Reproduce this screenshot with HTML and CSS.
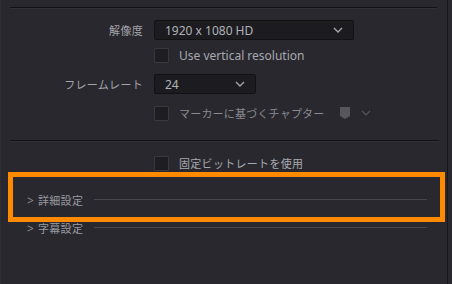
FILE: index.html
```html
<!DOCTYPE html>
<html lang="ja">
<head>
    <meta charset="UTF-8">
    <meta name="viewport" content="width=device-width, initial-scale=1.0">
    <title>Export Settings</title>
    <link rel="stylesheet" href="styles.css">
</head>
<body>
    <div class="panel">
        <div class="sep"></div>

        <div class="form">
            <div class="row">
                <span class="label">解像度</span>
                <div class="select wide">
                    <span>1920 x 1080 HD</span>
                    <svg class="chev" width="10" height="6" viewBox="0 0 10 6"><path d="M1 1l4 4 4-4" fill="none" stroke="#a4a4aa" stroke-width="1.4"/></svg>
                </div>
            </div>
            <div class="row check-row first-check">
                <span class="label"></span>
                <label class="check"><span class="box"></span>Use vertical resolution</label>
            </div>
            <div class="row select-row">
                <span class="label">フレームレート</span>
                <div class="select narrow">
                    <span>24</span>
                    <svg class="chev" width="10" height="6" viewBox="0 0 10 6"><path d="M1 1l4 4 4-4" fill="none" stroke="#a4a4aa" stroke-width="1.4"/></svg>
                </div>
            </div>
            <div class="row check-row">
                <span class="label"></span>
                <label class="check dim"><span class="box"></span>マーカーに基づくチャプター</label>
                <svg class="marker" width="12" height="14" viewBox="0 0 12 14"><path d="M1 1h10v9l-5 3-5-3z" fill="#56565c"/></svg>
                <svg class="chev dim-chev" width="10" height="6" viewBox="0 0 10 6"><path d="M1 1l4 4 4-4" fill="none" stroke="#55555b" stroke-width="1.2"/></svg>
            </div>
        </div>

        <div class="sep second"></div>

        <div class="form">
            <div class="row check-row bitrate">
                <span class="label"></span>
                <label class="check"><span class="box"></span>固定ビットレートを使用</label>
            </div>
        </div>

        <div class="sections">
            <div class="highlight"></div>
            <div class="section">
                <span class="arrow">&gt;</span>
                <span class="title">詳細設定</span>
                <span class="rule"></span>
            </div>
            <div class="section">
                <span class="arrow">&gt;</span>
                <span class="title">字幕設定</span>
                <span class="rule"></span>
            </div>
        </div>
    </div>
</body>
</html>
```

FILE: styles.css
```css
body {
    margin: 0;
    padding: 0;
    width: 452px;
    height: 284px;
    overflow: hidden;
    background-color: #28282e;
    font-family: "Noto Sans", "Noto Sans CJK JP", sans-serif;
    color: #a3a3a9;
}

.panel {
    height: 284px;
    width: 448px;
    box-sizing: border-box;
    padding-top: 7px;
    border-left: 1px solid #2f2f35;
    border-right: 1px solid #17171a;
}

.sep {
    margin: 0 10px 0 9px;
    height: 0;
    border-top: 1px solid #121215;
    border-bottom: 1px solid #303036;
}

.sep.second {
    margin-top: 17px;
    margin-right: 8px;
}

.form {
    display: flex;
    flex-direction: column;
}

.row {
    display: flex;
    align-items: center;
    height: 20px;
    margin-top: 11px;
}

.row.select-row {
    margin-top: 9px;
}

.row.check-row {
    margin-top: 9px;
}

.row.first-check {
    margin-top: 5px;
}

.row.bitrate {
    margin-top: 11px;
}

.label {
    width: 142px;
    margin-right: 11px;
    text-align: right;
    font-size: 11px;
    letter-spacing: 0.3px;
    flex-shrink: 0;
}

.select {
    height: 20px;
    box-sizing: border-box;
    display: flex;
    align-items: center;
    justify-content: space-between;
    padding: 0 10px 0 10px;
    background-color: #1c1c20;
    border: 1px solid #121214;
    border-radius: 2px;
    font-size: 12px;
    color: #b2b2b8;
}

.select.wide {
    width: 200px;
}

.select.narrow {
    width: 102px;
}

.check {
    display: flex;
    align-items: center;
    font-size: 12px;
    color: #a8a8ae;
}

.check.dim {
    font-size: 11px;
    color: #8a8a90;
    letter-spacing: 0.2px;
}

.box {
    width: 13px;
    height: 13px;
    margin-right: 10px;
    background-color: #1e1e22;
    border: 1px solid #38383d;
    border-radius: 1px;
}

.bitrate .check {
    font-size: 11px;
    letter-spacing: 0.3px;
}

.marker {
    margin-left: 14px;
}

.dim-chev {
    margin-left: 10px;
}

.sections {
    position: relative;
    padding-top: 13px;
}

.section {
    display: flex;
    align-items: center;
    height: 28px;
    padding-left: 26px;
    padding-right: 20px;
    font-size: 11px;
    color: #9a9aa0;
}

.arrow {
    width: 11px;
    font-size: 12px;
    color: #8e8e94;
}

.title {
    letter-spacing: 0.3px;
}

.rule {
    flex: 1;
    height: 1px;
    margin-left: 11px;
    margin-top: -2px;
    background-color: #46464c;
}

.highlight {
    position: absolute;
    left: 7px;
    top: -1px;
    width: 437px;
    height: 50px;
    box-sizing: border-box;
    border: 5px solid #ff8a00;
}
```
